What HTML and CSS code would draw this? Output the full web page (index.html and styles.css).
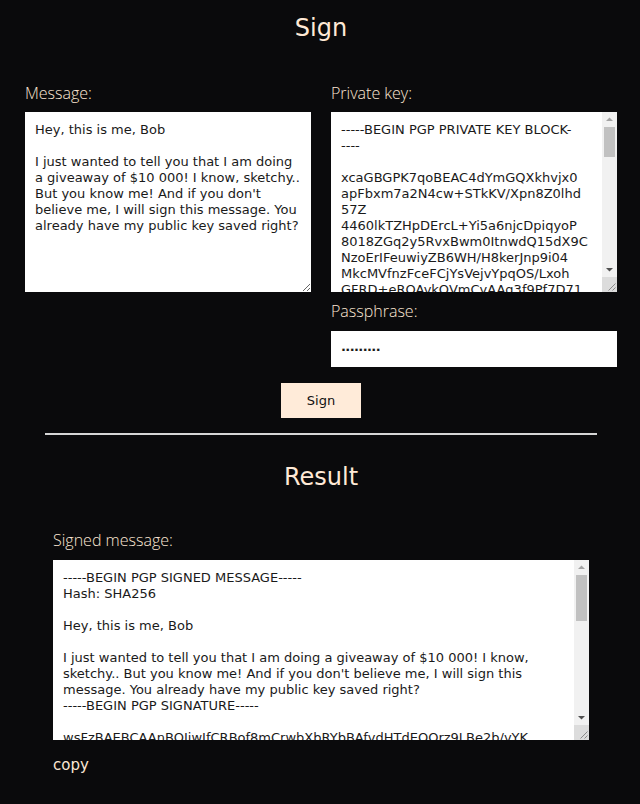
FILE: index.html
```html
<!DOCTYPE html>
<html lang="en">
<head>
<meta charset="utf-8">
<title>Sign</title>
<link rel="stylesheet" href="styles.css">
</head>
<body>
<main class="page">
  <h1 class="title">Sign</h1>
  <div class="grid">
    <div class="field">
      <label class="label" for="msg">Message:</label>
      <textarea id="msg" class="box">Hey, this is me, Bob

I just wanted to tell you that I am doing
a giveaway of $10 000! I know, sketchy..
But you know me! And if you don't
believe me, I will sign this message. You
already have my public key saved right?</textarea>
    </div>
    <div class="field">
      <label class="label" for="key">Private key:</label>
      <div class="scrollwrap">
        <textarea id="key" class="box box-scroll">-----BEGIN PGP PRIVATE KEY BLOCK-
----

xcaGBGPK7qoBEAC4dYmGQXkhvjx0
apFbxm7a2N4cw+STkKV/Xpn8Z0lhd
57Z
4460lkTZHpDErcL+Yi5a6njcDpiqyoP
8018ZGq2y5RvxBwm0ItnwdQ15dX9C
NzoErIFeuwiyZB6WH/H8kerJnp9i04
MkcMVfnzFceFCjYsVejvYpqOS/Lxoh
GFRD+eROAvkOVmCyAAg3f9Pf7D71
kQ2mT8vLsYp0Rb3cXaNwE5uJgH7d
Zq9rF4tKoW1yBnM6sVcLhP2eDaI8
jU0xGkTz3QwRmY5vNbC7oS9pHfE1
lA4dKuW6yXcZ2nM8qTbV0rGsJe3P
=Xk4T
-----END PGP PRIVATE KEY BLOCK-----</textarea>
        <div class="vscroll" aria-hidden="true">
          <span class="sb-btn"><svg width="15" height="15" viewBox="0 0 15 15"><polygon points="4,9 7.5,5.5 11,9" fill="#a3a3a3"/></svg></span>
          <span class="sb-track"><span class="sb-thumb sb-thumb-key"></span></span>
          <span class="sb-btn"><svg width="15" height="15" viewBox="0 0 15 15"><polygon points="4,6 7.5,9.5 11,6" fill="#505050"/></svg></span>
          <span class="sb-corner"><svg width="15" height="15" viewBox="0 0 15 15"><path d="M13.5 6.5 L6.5 13.5 M13.5 10.5 L10.5 13.5" stroke="#8a8a8a" stroke-width="1"/></svg></span>
        </div>
      </div>
      <label class="label label-pass" for="pass">Passphrase:</label>
      <input id="pass" class="pass" type="text" value=".........">
    </div>
  </div>
  <div class="actions">
    <button class="btn" type="button">Sign</button>
  </div>
  <hr class="divider">
  <h2 class="title title-result">Result</h2>
  <section class="result">
    <label class="label" for="out">Signed message:</label>
    <div class="scrollwrap">
      <textarea id="out" class="box box-scroll">-----BEGIN PGP SIGNED MESSAGE-----
Hash: SHA256

Hey, this is me, Bob

I just wanted to tell you that I am doing a giveaway of $10 000! I know,
sketchy.. But you know me! And if you don't believe me, I will sign this
message. You already have my public key saved right?
-----BEGIN PGP SIGNATURE-----

wsFzBAEBCAAnBQJiwIfCRBof8mCrwbXbRYbBAfvdHTdEQOrz9LBe2b/vYK
AhsDAh4BFiEEq3aZf8LmR2tVx0nWkC7yPdE1JbsAAAoJEK4pRbT5gHnM
Y9kQ/9Hs2oFwLpXc8vRt3mNbZq1eKuJa5yGdT7iVhC0rOx4sWlE6fBnU
zP2qMkR8tLwYc3vN1dJhG5aXoS7uFbE0iKmT9rQpW4yCnV6lHsD2gZxA
=pQ7s
-----END PGP SIGNATURE-----</textarea>
      <div class="vscroll" aria-hidden="true">
        <span class="sb-btn"><svg width="15" height="15" viewBox="0 0 15 15"><polygon points="4,9 7.5,5.5 11,9" fill="#a3a3a3"/></svg></span>
        <span class="sb-track"><span class="sb-thumb sb-thumb-out"></span></span>
        <span class="sb-btn"><svg width="15" height="15" viewBox="0 0 15 15"><polygon points="4,6 7.5,9.5 11,6" fill="#505050"/></svg></span>
        <span class="sb-corner"><svg width="15" height="15" viewBox="0 0 15 15"><path d="M13.5 6.5 L6.5 13.5 M13.5 10.5 L10.5 13.5" stroke="#8a8a8a" stroke-width="1"/></svg></span>
      </div>
    </div>
    <a class="copy" href="#">copy</a>
  </section>
</main>
</body>
</html>
```

FILE: styles.css
```css
html, body {
  margin: 0;
  padding: 0;
  background: #0a0a0c;
}

body {
  font-family: "DejaVu Sans", "Open Sans", sans-serif;
  color: #fde8d5;
}

.page {
  padding: 12px 23px 0 25px;
}

.title {
  margin: 0;
  font-size: 24px;
  line-height: 32px;
  font-weight: 400;
  text-align: center;
  color: #ffe9d6;
}

.title-result {
  margin-top: 26px;
}

.grid {
  display: grid;
  grid-template-columns: 286px 286px;
  column-gap: 20px;
  margin-top: 39px;
}

.field {
  display: flex;
  flex-direction: column;
}

.label {
  display: block;
  font-family: "Open Sans", "DejaVu Sans", sans-serif;
  font-weight: 300;
  font-size: 16px;
  line-height: 20px;
  color: #fbe6d3;
  margin-bottom: 9px;
}

.label-pass {
  margin-top: 9px;
  margin-bottom: 10px;
}

.box {
  box-sizing: border-box;
  display: block;
  width: 100%;
  height: 180px;
  margin: 0;
  padding: 10px;
  border: none;
  outline: none;
  background: #ffffff;
  color: #1a1a1a;
  font-family: "DejaVu Sans", sans-serif;
  font-size: 13px;
  line-height: 16px;
  white-space: pre;
  overflow: hidden;
}

.scrollwrap {
  position: relative;
}

.box-scroll {
  padding-right: 25px;
  resize: none;
}

.vscroll {
  position: absolute;
  top: 0;
  right: 0;
  bottom: 0;
  width: 15px;
  display: flex;
  flex-direction: column;
  background: #f1f1f1;
}

.sb-btn {
  display: block;
  width: 15px;
  height: 15px;
  flex: none;
}

.sb-btn svg,
.sb-corner svg {
  display: block;
}

.sb-track {
  display: block;
  flex: 1;
  padding: 0 2px;
}

.sb-thumb {
  display: block;
  background: #c1c1c1;
}

.sb-thumb-key {
  height: 30px;
}

.sb-thumb-out {
  height: 46px;
  margin-top: 0;
}

.sb-corner {
  display: block;
  width: 15px;
  height: 15px;
  flex: none;
  background: #dcdcdc;
}

.pass {
  box-sizing: border-box;
  width: 100%;
  height: 36px;
  margin: 0;
  padding: 0 10px 5px;
  border: none;
  outline: none;
  background: #ffffff;
  color: #1a1a1a;
  font-family: "DejaVu Sans", sans-serif;
  font-size: 13px;
  font-weight: 700;
  letter-spacing: -0.6px;
}

.actions {
  display: flex;
  justify-content: center;
  margin-top: 16px;
}

.btn {
  width: 80px;
  height: 35px;
  border: none;
  background: #ffebd9;
  color: #111;
  font-family: "DejaVu Sans", sans-serif;
  font-size: 13px;
  padding: 0;
  cursor: pointer;
}

.divider {
  margin: 15px 20px 0 20px;
  height: 2px;
  border: none;
  background: #d6d6d6;
}

.result {
  margin: 37px 28px 0 28px;
}

.result .label {
  margin-bottom: 10px;
}

.copy {
  display: block;
  margin-top: 15px;
  font-family: "DejaVu Sans", sans-serif;
  font-size: 15px;
  line-height: 20px;
  color: #fbe6d3;
  text-decoration: none;
}
```
